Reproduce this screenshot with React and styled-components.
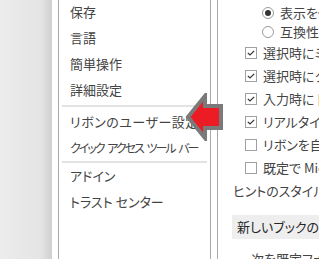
import styled, {createGlobalStyle} from 'styled-components'

const GlobalStyle = createGlobalStyle`
  body {
    margin: 0;
    overflow: hidden;
    background: #fff;
    font-family: "Noto Sans CJK JP", "Noto Sans", sans-serif;
    font-feature-settings: "palt";
  }
`

const Screen = styled.div`
  position: relative;
  display: flex;
  height: 259px;
  width: 319px;
  overflow: hidden;
  background: #fff;
`

const Backdrop = styled.div`
  width: 52px;
  flex-shrink: 0;
  background: linear-gradient(to right, #ececec 0%, #e4e4e4 80%, #cfcfcf 100%);
`

const Gutter = styled.div`
  width: ${p => p.w}px;
  flex-shrink: 0;
`

const MenuPane = styled.nav`
  width: 151px;
  flex-shrink: 0;
  border-left: 1px solid #a9a9a9;
  border-right: 1px solid #a9a9a9;
  display: flex;
  flex-direction: column;
`

const MenuItem = styled.div`
  flex-shrink: 0;
  height: 26px;
  line-height: 26px;
  padding-left: 11px;
  font-size: ${p => p.fs || '13px'};
  letter-spacing: ${p => p.ls || '0'};
  word-spacing: ${p => p.ws || '0'};
  color: #444;
  white-space: nowrap;
  &:first-child {
    margin-top: -1px;
  }
`

const Divider = styled.div`
  flex-shrink: 0;
  height: 2px;
  background: #e3e3e3;
  margin: ${p => p.m} 3px;
`

const Content = styled.div`
  flex: 1;
  min-width: 0;
  border-left: 1px solid #a9a9a9;
  padding-top: 3px;
  display: flex;
  flex-direction: column;
`

const Row = styled.div`
  flex-shrink: 0;
  display: flex;
  align-items: center;
  height: ${p => p.h}px;
  padding-left: ${p => p.indent}px;
  font-size: 13px;
  color: #444;
  white-space: nowrap;
`

const Radio = styled.span`
  width: 12px;
  height: 12px;
  box-sizing: border-box;
  border: 1px solid #9a9a9a;
  border-radius: 50%;
  flex-shrink: 0;
  margin-right: 6px;
  display: flex;
  align-items: center;
  justify-content: center;
  &::after {
    content: '';
    width: 6px;
    height: 6px;
    border-radius: 50%;
    background: ${p => (p.on ? '#333' : 'transparent')};
  }
`

const Box = styled.span`
  width: 12px;
  height: 12px;
  box-sizing: border-box;
  border: 1px solid #a0a0a0;
  flex-shrink: 0;
  margin-right: 6px;
  display: flex;
  align-items: center;
  justify-content: center;
`

const Section = styled.div`
  flex-shrink: 0;
  margin: 13px 0 7px 14px;
  height: 24px;
  line-height: 24px;
  padding-left: 5px;
  background: #eeeeee;
  font-size: 13px;
  color: #262626;
  white-space: nowrap;
`

const Arrow = styled.svg`
  position: absolute;
  left: 185px;
  top: 93px;
`

const Check = () => (
  <svg width="8" height="6" viewBox="0 0 8 6">
    <path d="M0.8 2.8 L3 5 L7.2 0.8" fill="none" stroke="#333" strokeWidth="1.2"/>
  </svg>
)

const menu1 = ['保存', '言語', '簡単操作', '詳細設定']
const menu3 = ['アドイン', 'トラスト センター']

const checks = [
  ['選択時にミニ ツール バーを表示する', true],
  ['選択時にクイック分析オプションを表示する', true],
  ['入力時に [挿入オプション] ボタンを表示する', true],
  ['リアルタイムのプレビュー表示機能を有効にする', true],
  ['リボンを自動的に折りたたむ', false],
  ['既定で Microsoft Search ボックスを折りたたむ', false],
]

const App = () => (
  <Screen>
    <GlobalStyle/>
    <Backdrop/>
    <Gutter w={6}/>
    <MenuPane>
      {menu1.map(t => <MenuItem key={t}>{t}</MenuItem>)}
      <Divider m="2px"/>
      <MenuItem ls="0.5px">リボンのユーザー設定</MenuItem>
      <MenuItem fs="12px" ls="-2px" ws="3px">クイック アクセス ツール バー</MenuItem>
      <Divider m="0"/>
      {menu3.map(t => <MenuItem key={t}>{t}</MenuItem>)}
    </MenuPane>
    <Gutter w={6}/>
    <Content>
      <Row h={19} indent={44}><Radio on/>表示を優先して最適化</Row>
      <Row h={19} indent={44}><Radio/>互換性に対応した最適化</Row>
      {checks.map(([t, on]) => (
        <Row key={t} h={23} indent={27}><Box>{on && <Check/>}</Box>{t}</Row>
      ))}
      <Row h={23} indent={15}>ヒントのスタイル(R):</Row>
      <Section>新しいブックの作成時</Section>
      <Row h={24} indent={33}>次を既定フォントとして使用(N):</Row>
    </Content>
    <Arrow width="40" height="48" viewBox="0 0 40 48">
      <path d="M3 24 L20 3 L20 13 L36 13 L36 35 L20 35 L20 45 Z"
            fill="#ed1c24" stroke="#7a7a7a" strokeWidth="4" strokeLinejoin="miter"/>
    </Arrow>
  </Screen>
)

export default App
